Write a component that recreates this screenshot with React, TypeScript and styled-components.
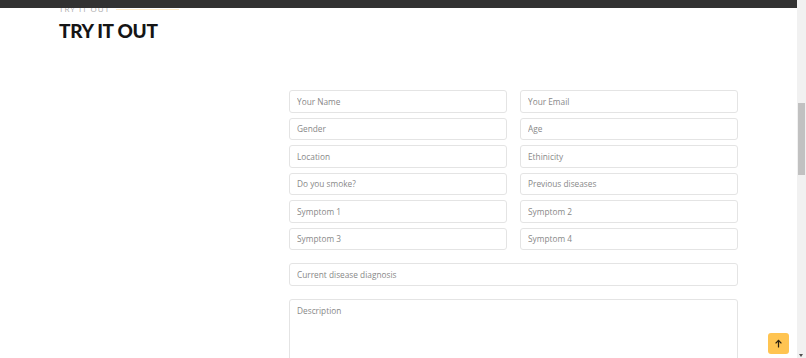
import styled, { createGlobalStyle } from 'styled-components';

const GlobalStyle = createGlobalStyle`
  html, body {
    margin: 0;
    padding: 0;
    height: 100%;
    overflow: hidden;
    background: #fff;
  }
  body {
    font-family: 'Open Sans', 'Noto Sans', sans-serif;
    color: #444;
  }
  * {
    box-sizing: border-box;
  }
`;

const Header = styled.header`
  position: fixed;
  top: 0;
  left: 0;
  right: 9px;
  height: 8px;
  background-color: #323232;
  z-index: 5;
`;

const Scrollbar = styled.div`
  position: fixed;
  top: 0;
  right: 0;
  bottom: 0;
  width: 9px;
  background-color: #f1f1f1;
  z-index: 6;
  .thumb {
    position: absolute;
    left: 1px;
    right: 1px;
    top: 103px;
    height: 72px;
    background-color: #c1c1c1;
  }
  .arrow {
    position: absolute;
    bottom: 1px;
    left: 2px;
    width: 0;
    height: 0;
    border-left: 2.5px solid transparent;
    border-right: 2.5px solid transparent;
    border-top: 3px solid #505050;
  }
`;

const Section = styled.section`
  height: 358px;
  overflow: hidden;
  padding: 4px 68px 0 59px;
`;

const SectionTitle = styled.div`
  margin-bottom: 47px;
  h2 {
    display: flex;
    align-items: center;
    margin: 0;
    font-family: 'Open Sans', sans-serif;
    font-size: 8px;
    line-height: 10px;
    font-weight: 500;
    letter-spacing: 1px;
    color: #aaa;
    text-transform: uppercase;
    &::after {
      content: '';
      width: 63px;
      height: 1px;
      margin-left: 6px;
      background-color: #ffeccb;
    }
  }
  p {
    margin: 5px 0 0;
    font-family: Lato, Inter, sans-serif;
    font-size: 19px;
    line-height: 24px;
    font-weight: 900;
    letter-spacing: -0.3px;
    color: #151515;
  }
`;

const Layout = styled.div`
  display: grid;
  grid-template-columns: 230px 1fr;
`;

const Form = styled.form`
  display: flex;
  flex-direction: column;
  gap: 13px;
`;

const FieldGrid = styled.div`
  display: grid;
  grid-template-columns: 1fr 1fr;
  column-gap: 13px;
  row-gap: 5px;
`;

const Field = styled.input`
  width: 100%;
  height: 22.5px;
  padding: 0 7px;
  border: 1px solid #e4e4e4;
  border-radius: 3px;
  background: #fff;
  outline: none;
  font-family: 'Open Sans', sans-serif;
  font-size: 8.3px;
  color: #444;
  &::placeholder {
    color: #888;
  }
`;

const TextArea = styled.textarea`
  width: 100%;
  height: 90px;
  padding: 5px 7px;
  border: 1px solid #e4e4e4;
  border-radius: 3px;
  resize: none;
  outline: none;
  font-family: 'Open Sans', sans-serif;
  font-size: 8.3px;
  &::placeholder {
    color: #888;
  }
`;

const BackToTop = styled.a`
  position: fixed;
  right: 17px;
  bottom: 4px;
  width: 21px;
  height: 21px;
  display: flex;
  align-items: center;
  justify-content: center;
  border-radius: 3px;
  background-color: #ffc451;
  z-index: 4;
  svg {
    width: 9px;
    height: 9px;
  }
`;

const pairs: [string, string][] = [
  ['Your Name', 'Your Email'],
  ['Gender', 'Age'],
  ['Location', 'Ethinicity'],
  ['Do you smoke?', 'Previous diseases'],
  ['Symptom 1', 'Symptom 2'],
  ['Symptom 3', 'Symptom 4'],
];

export default function App() {
  return (
    <>
      <GlobalStyle />
      <Header />
      <Section id="try">
        <SectionTitle>
          <h2>Try it out</h2>
          <p>TRY IT OUT</p>
        </SectionTitle>
        <Layout>
          <div />
          <Form onSubmit={(e) => e.preventDefault()}>
            <FieldGrid>
              {pairs.flat().map((label) => (
                <Field key={label} type="text" placeholder={label} />
              ))}
            </FieldGrid>
            <Field type="text" placeholder="Current disease diagnosis" />
            <TextArea placeholder="Description" />
          </Form>
        </Layout>
      </Section>
      <BackToTop href="#try">
        <svg viewBox="0 0 16 16" fill="none" stroke="#2b2110" strokeWidth="2.2" strokeLinecap="round" strokeLinejoin="round">
          <path d="M8 14V2.5" />
          <path d="M3.5 7L8 2.5L12.5 7" />
        </svg>
      </BackToTop>
      <Scrollbar>
        <div className="thumb" />
        <div className="arrow" />
      </Scrollbar>
    </>
  );
}
